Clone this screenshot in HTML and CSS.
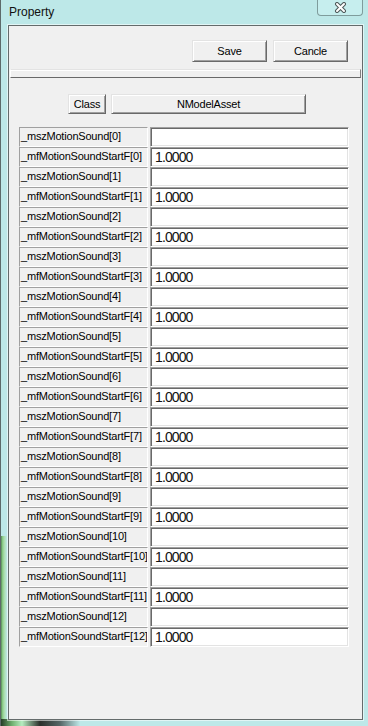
FILE: index.html
```html
<!DOCTYPE html>
<html lang="en">
<head>
    <meta charset="UTF-8">
    <meta name="viewport" content="width=device-width, initial-scale=1.0">
    <title>Property</title>
    <link rel="stylesheet" href="styles.css">
</head>
<body>
    <div class="window">
        <!-- Title bar -->
        <div class="titlebar">
            <div class="title">Property</div>
            <div class="close-button">
                <svg width="13" height="11" viewBox="0 0 13 11">
                    <path d="M3 2 L10 9 M10 2 L3 9" stroke="#4d5858" stroke-width="4" stroke-linecap="round"/>
                    <path d="M3 2 L10 9 M10 2 L3 9" stroke="#ffffff" stroke-width="2" stroke-linecap="round"/>
                </svg>
            </div>
        </div>

        <div class="client">
            <!-- Save / Cancle toolbar -->
            <div class="toolbar">
                <button class="button wide">Save</button>
                <button class="button wide">Cancle</button>
            </div>

            <div class="splitter"></div>

            <!-- Property grid -->
            <div class="property-pane">
                <div class="class-row">
                    <button class="button class-button">Class</button>
                    <button class="button class-name">NModelAsset</button>
                </div>

                <div class="grid">
                    <div class="label">_mszMotionSound[0]</div><div class="value"></div>
                    <div class="label">_mfMotionSoundStartF[0]</div><div class="value">1.0000</div>
                    <div class="label">_mszMotionSound[1]</div><div class="value"></div>
                    <div class="label">_mfMotionSoundStartF[1]</div><div class="value">1.0000</div>
                    <div class="label">_mszMotionSound[2]</div><div class="value"></div>
                    <div class="label">_mfMotionSoundStartF[2]</div><div class="value">1.0000</div>
                    <div class="label">_mszMotionSound[3]</div><div class="value"></div>
                    <div class="label">_mfMotionSoundStartF[3]</div><div class="value">1.0000</div>
                    <div class="label">_mszMotionSound[4]</div><div class="value"></div>
                    <div class="label">_mfMotionSoundStartF[4]</div><div class="value">1.0000</div>
                    <div class="label">_mszMotionSound[5]</div><div class="value"></div>
                    <div class="label">_mfMotionSoundStartF[5]</div><div class="value">1.0000</div>
                    <div class="label">_mszMotionSound[6]</div><div class="value"></div>
                    <div class="label">_mfMotionSoundStartF[6]</div><div class="value">1.0000</div>
                    <div class="label">_mszMotionSound[7]</div><div class="value"></div>
                    <div class="label">_mfMotionSoundStartF[7]</div><div class="value">1.0000</div>
                    <div class="label">_mszMotionSound[8]</div><div class="value"></div>
                    <div class="label">_mfMotionSoundStartF[8]</div><div class="value">1.0000</div>
                    <div class="label">_mszMotionSound[9]</div><div class="value"></div>
                    <div class="label">_mfMotionSoundStartF[9]</div><div class="value">1.0000</div>
                    <div class="label">_mszMotionSound[10]</div><div class="value"></div>
                    <div class="label">_mfMotionSoundStartF[10]</div><div class="value">1.0000</div>
                    <div class="label">_mszMotionSound[11]</div><div class="value"></div>
                    <div class="label">_mfMotionSoundStartF[11]</div><div class="value">1.0000</div>
                    <div class="label">_mszMotionSound[12]</div><div class="value"></div>
                    <div class="label">_mfMotionSoundStartF[12]</div><div class="value">1.0000</div>
                </div>
            </div>
        </div>
    </div>
</body>
</html>
```

FILE: styles.css
```css
/* General styling */
body {
    margin: 0;
    width: 368px;
    height: 726px;
    overflow: hidden;
    font-family: 'Liberation Sans', Arial, sans-serif;
    color: #000;
    background-color: #bde8e8;
    /* bits of the desktop showing through the glass frame */
    background-image:
        linear-gradient(to right, #1f3320 0, #6fb06f 12px, #b6ecc0 22px, #2b2f2b 40px, #566 60px, rgba(189, 232, 232, 0) 80px),
        linear-gradient(to right, #243a24 0, #7cc27c 2px, #a8dca8 4px, rgba(189, 232, 232, 0) 7px);
    background-size: 80px 7px, 8px 190px;
    background-position: left bottom, left bottom;
    background-repeat: no-repeat;
}

.window {
    height: 100%;
    border-left: 1px solid #5d6a6a;
    box-sizing: border-box;
}

/* Title bar */
.titlebar {
    height: 25px;
    display: flex;
    justify-content: space-between;
    align-items: flex-start;
}

.title {
    font-size: 12px;
    line-height: 14px;
    padding: 5px 0 0 8px;
    color: #111;
}

.close-button {
    width: 44px;
    height: 15px;
    margin-right: 5px;
    border: 1px solid #7f9c9c;
    border-top: none;
    border-radius: 0 0 4px 4px;
    background-color: #c6eeee;
    display: flex;
    justify-content: center;
    align-items: center;
}

/* Client area */
.client {
    margin-left: 7px;
    width: 355px;
    height: 695px;
    box-sizing: border-box;
    border: 1px solid #646b6b;
    box-shadow: 0 0 0 1px rgba(255, 255, 255, 0.55);
    background-color: #f0f0f0;
    display: flex;
    flex-direction: column;
}

.toolbar {
    height: 43px;
    box-sizing: border-box;
    padding: 14px 14px 0 0;
    display: flex;
    justify-content: flex-end;
    gap: 6px;
}

.button {
    height: 22px;
    box-sizing: border-box;
    padding: 0;
    font-family: inherit;
    font-size: 11px;
    letter-spacing: -0.2px;
    color: #000;
    background-color: #f0f0f0;
    border-top: 1px solid #e3e3e3;
    border-left: 1px solid #e3e3e3;
    border-right: 1px solid #696969;
    border-bottom: 1px solid #696969;
    box-shadow: inset 1px 1px #ffffff, inset -1px -1px #a0a0a0;
}

.wide {
    width: 75px;
}

.splitter {
    height: 9px;
    margin: 0 1px;
    box-sizing: border-box;
    background-color: #f0f0f0;
    border-top: 1px solid #e3e3e3;
    border-left: 1px solid #fff;
    border-right: 1px solid #808080;
    border-bottom: 1px solid #696969;
    box-shadow: inset 0 1px #ffffff;
}

.property-pane {
    flex: 1;
    padding: 16px 0 0 10px;
}

.class-row {
    display: flex;
    gap: 5px;
    padding-left: 49px;
}

.class-row .button {
    height: 20px;
}

.class-button {
    width: 38px;
}

.class-name {
    width: 195px;
}

/* Label / value grid */
.grid {
    margin-top: 13px;
    display: grid;
    grid-template-columns: 129px 199px;
    grid-auto-rows: 20px;
    column-gap: 2px;
}

.label {
    box-sizing: border-box;
    border-top: 1px solid #a0a0a0;
    border-left: 1px solid #a0a0a0;
    border-right: 1px solid #ffffff;
    border-bottom: 1px solid #ffffff;
    padding-left: 1px;
    font-size: 11px;
    line-height: 16px;
    letter-spacing: -0.2px;
    white-space: nowrap;
    overflow: hidden;
}

.value {
    box-sizing: border-box;
    background-color: #fff;
    border-top: 1px solid #a0a0a0;
    border-left: 1px solid #a0a0a0;
    border-right: 1px solid #ffffff;
    border-bottom: 1px solid #ffffff;
    box-shadow: inset 1px 1px #696969, inset -1px -1px #e3e3e3;
    padding-left: 4px;
    font-size: 14px;
    line-height: 19px;
    letter-spacing: -0.9px;
    color: #111;
}
```
